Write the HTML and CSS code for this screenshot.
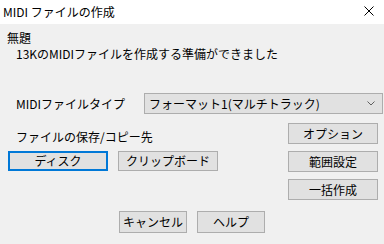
FILE: index.html
```html
<!DOCTYPE html>
<html lang="ja">
<head>
    <meta charset="UTF-8">
    <title>MIDI ファイルの作成</title>
    <link rel="stylesheet" href="styles.css">
</head>
<body>
    <div class="window">
        <div class="titlebar">
            <span class="title">MIDI ファイルの作成</span>
            <svg class="close" width="10" height="10" viewBox="0 0 10 10">
                <path d="M0.5 0.5 L9.5 9.5 M9.5 0.5 L0.5 9.5" stroke="#000" stroke-width="1" fill="none"/>
            </svg>
        </div>

        <div class="message">
            <div class="name">無題</div>
            <div class="info">13KのMIDIファイルを作成する準備ができました</div>
        </div>

        <div class="type-row">
            <label class="type-label">MIDIファイルタイプ</label>
            <div class="combo">
                <span>フォーマット1(マルチトラック)</span>
                <svg width="8" height="5" viewBox="0 0 8 5">
                    <path d="M0.5 0.5 L4 4 L7.5 0.5" stroke="#606060" stroke-width="1" fill="none"/>
                </svg>
            </div>
        </div>

        <div class="main">
            <div class="left">
                <div class="save-label">ファイルの保存/コピー先</div>
                <div class="dest">
                    <button class="btn btn-default">ディスク</button>
                    <button class="btn">クリップボード</button>
                </div>
            </div>
            <div class="right">
                <button class="btn">オプション</button>
                <button class="btn">範囲設定</button>
                <button class="btn">一括作成</button>
            </div>
        </div>

        <div class="footer">
            <button class="btn">キャンセル</button>
            <button class="btn">ヘルプ</button>
        </div>
    </div>
</body>
</html>
```

FILE: styles.css
```css
body {
    margin: 0;
    font-family: "Noto Sans CJK JP", "Noto Sans", sans-serif;
    font-size: 12px;
    line-height: 14px;
    color: #000;
}
.window {
    width: 384px;
    height: 244px;
    background-color: #f0f0f0;
    overflow: hidden;
}
.titlebar {
    height: 24px;
    background-color: #fff;
    display: flex;
    align-items: center;
    justify-content: space-between;
    padding: 0 10px 0 3px;
}
.close {
    margin-top: -2px;
}
.message {
    padding: 6px 0 0 7px;
}
.name {
    line-height: 16px;
}
.info {
    padding-left: 9px;
    line-height: 16px;
}
.type-row {
    display: flex;
    align-items: center;
    margin-top: 31px;
    padding-left: 16px;
}
.type-label {
    width: 128px;
}
.combo {
    height: 19px;
    border: 1px solid #adadad;
    background-color: #e1e1e1;
    display: flex;
    align-items: center;
    justify-content: space-between;
    padding: 0 7px 0 4px;
    box-sizing: content-box;
    width: 226px;
}
.main {
    display: flex;
    justify-content: space-between;
    padding: 9px 6px 0 8px;
}
.save-label {
    padding: 7px 0 0 8px;
}
.dest {
    display: flex;
    gap: 10px;
    margin-top: 7px;
}
.right {
    display: flex;
    flex-direction: column;
    gap: 7px;
}
.btn {
    font-family: inherit;
    font-size: 12px;
    line-height: 14px;
    color: #000;
    background-color: #e1e1e1;
    border: 1px solid #adadad;
    padding: 0;
    margin: 0;
    height: 21px;
    box-sizing: border-box;
}
.dest .btn {
    width: 100px;
    height: 20px;
}
.btn-default {
    border: 2px solid #0078d7;
}
.right .btn {
    width: 90px;
}
.footer {
    display: flex;
    justify-content: center;
    gap: 10px;
    margin-top: 11px;
}
.footer .btn {
    width: 68px;
    height: 22px;
}
```
